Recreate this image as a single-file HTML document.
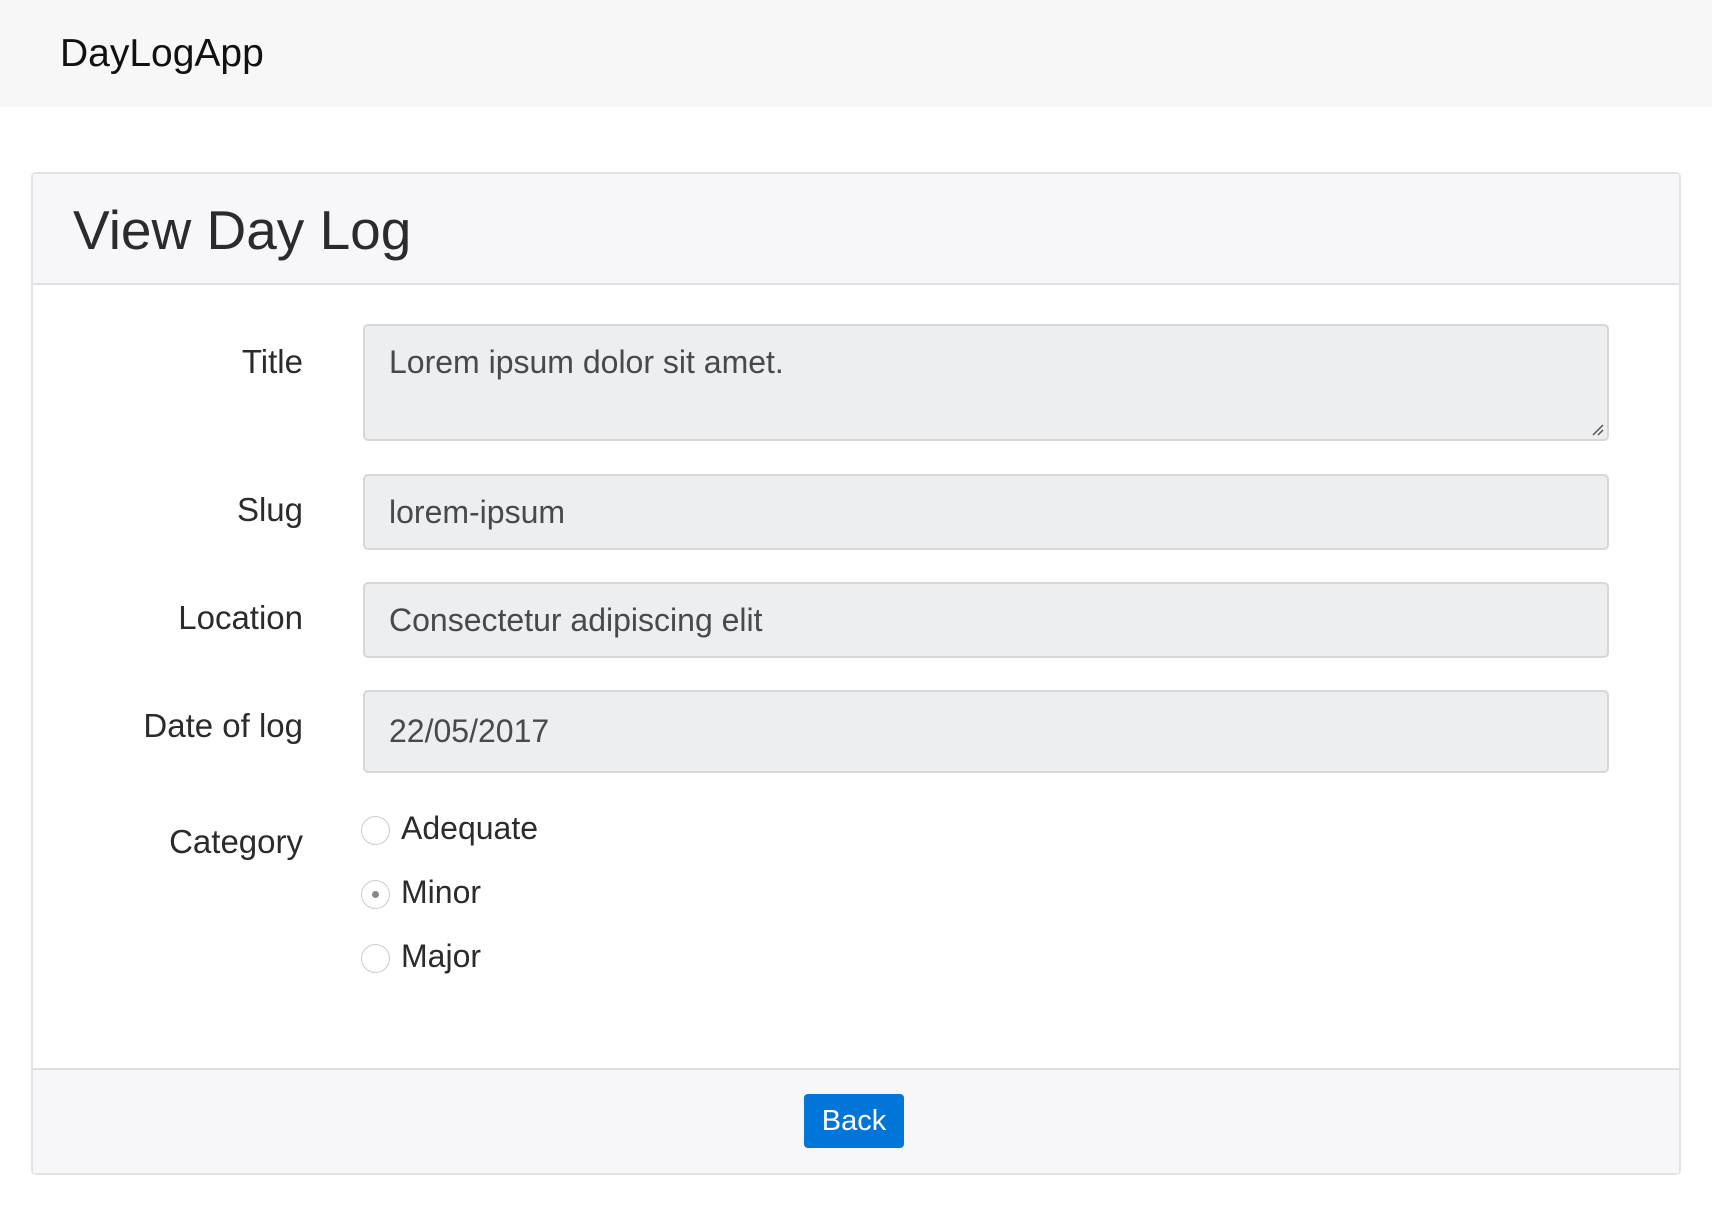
<!DOCTYPE html>
<html><head><style>
body{margin:0;width:1712px;height:1210px;background:#fff;font-family:"Liberation Sans",sans-serif;color:#292b2c;position:relative;overflow:hidden}
.nav{position:absolute;left:0;top:0;width:1712px;height:107px;background:#f7f7f7}
.brand{position:absolute;left:60px;top:32px;font-size:39px;color:#111}
.card{position:absolute;left:31px;top:172px;width:1646px;height:999px;border:2px solid #e3e3e5;border-radius:5px;background:#fff}
.hd{position:absolute;left:0;top:0;right:0;height:109px;background:#f7f7f9;border-bottom:2px solid #dfdfe1}
.hd h1{margin:0;position:absolute;left:40px;top:24px;font-size:55px;font-weight:normal;color:#292b2c}
.lbl{position:absolute;right:1376px;font-size:33px;color:#292b2c;text-align:right;white-space:nowrap}
.inp{position:absolute;left:330px;width:1246px;background:#eceeef;border:2px solid #d5d7d9;border-radius:5px;box-sizing:border-box;font-size:32px;color:#464a4c;padding-left:24px}
.rad{position:absolute;left:328px;width:29px;height:29px;border:1.5px solid #ccc;border-radius:50%;box-sizing:border-box;background:#fff}
.rl{position:absolute;left:368px;font-size:32px;color:#292b2c}
.ft{position:absolute;left:0;bottom:0;right:0;height:103px;background:#f7f7f9;border-top:2px solid #dfdfe1}
.btn{position:absolute;left:771px;top:24px;width:100px;height:54px;background:#0275d8;border-radius:4px;color:#fff;font-size:29px;text-align:center;line-height:54px}
</style></head><body>
<div class="nav"><div class="brand">DayLogApp</div></div>
<div class="card">
<div class="hd"><h1>View Day Log</h1></div>
<div class="lbl" style="top:169px">Title</div>
<div class="inp" style="top:150px;height:117px;padding-top:18px">Lorem ipsum dolor sit amet.
<svg style="position:absolute;right:3px;bottom:3px" width="14" height="14"><path d="M3 13L13 3M8 13L13 8" stroke="#555" stroke-width="1.5"/></svg></div>
<div class="lbl" style="top:317px">Slug</div>
<div class="inp" style="top:300px;height:76px;line-height:72px">lorem-ipsum</div>
<div class="lbl" style="top:425px">Location</div>
<div class="inp" style="top:408px;height:76px;line-height:72px">Consectetur adipiscing elit</div>
<div class="lbl" style="top:533px">Date of log</div>
<div class="inp" style="top:516px;height:83px;line-height:79px">22/05/2017</div>
<div class="lbl" style="top:649px">Category</div>
<div class="rad" style="top:642px"></div><div class="rl" style="top:636px">Adequate</div>
<div class="rad" style="top:706px"><div style="position:absolute;left:10px;top:10px;width:7px;height:7px;border-radius:50%;background:#888"></div></div><div class="rl" style="top:700px">Minor</div>
<div class="rad" style="top:770px"></div><div class="rl" style="top:764px">Major</div>
<div class="ft"><div class="btn">Back</div></div>
</div>
</body></html>
